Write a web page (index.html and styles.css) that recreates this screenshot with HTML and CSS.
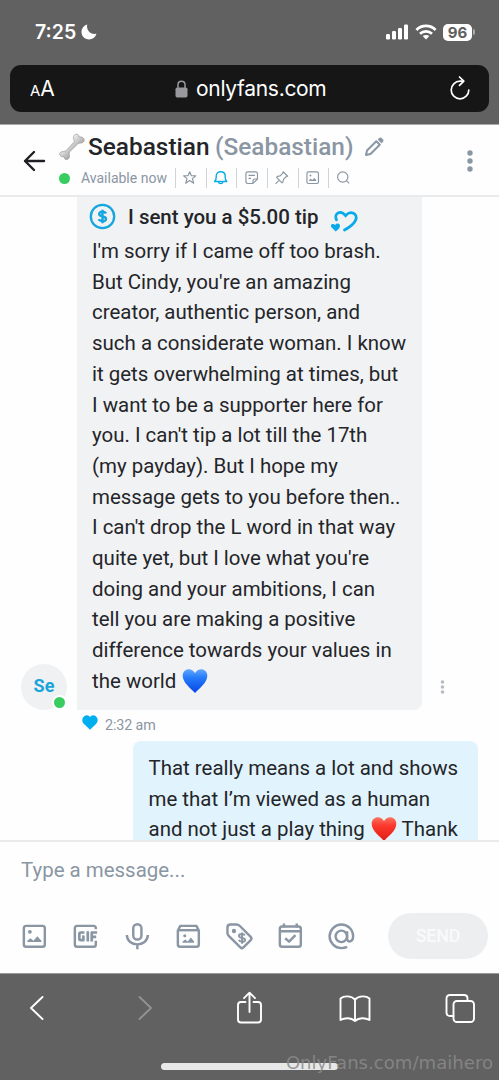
FILE: index.html
```html
<!DOCTYPE html>
<html lang="en">
<head>
<meta charset="utf-8">
<meta name="viewport" content="width=device-width">
<title>Messages</title>
<link rel="stylesheet" href="styles.css">
</head>
<body>
<div class="phone">
  <header class="browser-top">
    <div class="status">
      <span class="clock">7:25</span>
      <svg class="moon" width="16" height="16" viewBox="0 0 16 16"><path fill="#fff" d="M6.2.5C5.1 5.8 8.9 10.8 15.5 9.8C14.3 13.4 11.500 15.500 8 15.500C3.800 15.500.5 12.200.5 8.100C.5 4.600 2.800 1.500 6.200.5Z"/></svg>
      <div class="signals">
        <svg width="23" height="16" viewBox="0 0 23 16" fill="#fff"><rect x="0" y="10" width="4" height="5.500" rx="1.200"/><rect x="6" y="7" width="4" height="8.500" rx="1.200"/><rect x="12" y="4" width="4" height="11.500" rx="1.200"/><rect x="18" y=".5" width="4" height="15" rx="1.200"/></svg>
        <svg class="wifi" width="22" height="16" viewBox="0 0 22 16" fill="none" stroke="#fff" stroke-width="2.700"><path d="M1.400 6C6.700.6 15.300.6 20.600 6"/><path d="M5 9.700C8.300 6.500 13.700 6.500 17 9.700"/><path fill="#fff" stroke="none" d="M7.700 12.100C9.500 10.500 12.500 10.500 14.300 12.100L11 15.600Z"/></svg>
        <span class="battery">96</span><i class="nub"></i>
      </div>
    </div>
    <div class="address">
      <span class="text-size"><small>A</small>A</span>
      <div class="site">
        <svg width="13" height="18" viewBox="0 0 13 18"><rect x=".5" y="7.500" width="12" height="10" rx="1.700" fill="#98989d"/><path d="M3 8V4.800C3 .2 10 .2 10 4.800V8" fill="none" stroke="#98989d" stroke-width="1.500"/></svg>
        <span>onlyfans.com</span>
      </div>
      <svg class="reload" width="22" height="25" viewBox="0 0 22 25" fill="none" stroke="#fff" stroke-width="1.700" stroke-linecap="round" stroke-linejoin="round"><path d="M14 5.200H11A8.800 8.800 0 1 0 19.800 14"/><path d="M10.500 1L14.800 5.200L10.500 9.400"/></svg>
    </div>
  </header>

  <section class="chat-head">
    <svg class="back" width="24" height="24" viewBox="0 0 24 24" fill="none" stroke="#1f2023" stroke-width="2.400" stroke-linecap="round" stroke-linejoin="round"><path d="M21 12H2M11 3L2 12L11 21"/></svg>
    <div class="who">
      <div class="name-row">
        <svg class="bone" width="28" height="30" viewBox="0 0 28 30"><defs><linearGradient id="bone" x1="0" y1="0" x2="1" y2="1"><stop offset=".3" stop-color="#f2f2f2"/><stop offset=".65" stop-color="#aaa"/></linearGradient></defs><path d="M16 8C14.500 5 16 2 19 2.200C20.300 2.300 20.700 3.500 21 5C25.500 4 28 8.500 24.800 10.500C23 11.500 21.200 10.700 20 11.600L11.500 20C10.500 21.500 12 23 11.200 25.500C10 28.800 5.600 28 6.300 24.700C2.500 25.500 0 22 2.700 20.200C4.500 18.900 6.500 20 8 18.700L15.700 10.500C16.300 9.800 16.500 9 16 8Z" fill="url(#bone)" stroke="#999" stroke-width=".7"/></svg>
        <span class="name">Seabastian</span>
        <span class="alias">(Seabastian)</span>
        <svg class="pencil" width="20" height="20" viewBox="0 0 20 20" fill="none" stroke="#8a96a3" stroke-width="2" stroke-linejoin="round"><path d="M2 18L3 13.500L12.300 4.200L15.800 7.700L6.500 17Z"/><path fill="#8a96a3" stroke-width="1" d="M14.100 2.500L15.300 1.400C17.400.2 19.900 2.700 18.600 4.800L17.500 5.900Z"/></svg>
      </div>
      <div class="tools">
        <i class="online"></i><span class="available">Available now</span>
        <span class="tool"><svg viewBox="0 0 24 24"><path d="M12 2.800L14.700 9H21.500L16.200 13.500L18.200 20.500L12 16.500L5.800 20.500L7.800 13.500L2.500 9H9.300Z"/></svg></span>
        <span class="tool bell"><svg viewBox="0 0 24 24"><path d="M2.500 18H21.500C19.400 16.500 19 14 19 11V9.500C19 .5 5 .5 5 9.500V11C5 14 4.600 16.500 2.500 18ZM8.500 18.500C9.200 22.200 14.800 22.200 15.500 18.500"/></svg></span>
        <span class="tool"><svg viewBox="0 0 24 24"><path d="M14 21H6Q3 21 3 18V6Q3 3 6 3H18Q21 3 21 6V14L14 21V17Q14 14 17 14H21M7 8.500H17M7 13H11"/></svg></span>
        <span class="tool"><svg viewBox="0 0 24 24"><path d="M14.300 2.700L21.300 9.700L18.800 10.500L14.800 14.500L14 18.500L12.500 20L4 11.500L5.500 10L9.500 9.200L13.500 5.200ZM8.200 15.800L2.500 21.500"/></svg></span>
        <span class="tool"><svg viewBox="0 0 24 24"><rect x="3" y="3" width="18" height="18" rx="2.500"/><circle class="solid" cx="8.500" cy="8.500" r="1.500"/><path class="solid" d="M6.500 17V15.500L9 13.500L11.300 15.500L14.500 12.500L17.500 15.500V17Z"/></svg></span>
        <span class="tool"><svg viewBox="0 0 24 24"><circle cx="10.500" cy="11" r="8"/><path d="M16.200 16.700L20.500 21"/></svg></span>
      </div>
    </div>
    <svg class="more" width="6" height="22" viewBox="0 0 6 22" fill="#8a96a3"><circle cx="3" cy="3" r="2.700"/><circle cx="3" cy="11" r="2.700"/><circle cx="3" cy="19" r="2.700"/></svg>
  </section>

  <main class="thread">
    <div class="incoming">
      <div class="avatar">Se<i class="presence"></i></div>
      <article class="bubble theirs">
        <div class="tip">
          <svg class="coin" width="27" height="27" viewBox="0 0 27 27"><circle cx="13.500" cy="13.500" r="11.700" fill="none" stroke="#15a5df" stroke-width="2.300"/><path d="M17 10.600C15.900 8.200 10.200 7.800 10.200 10.900C10.200 14.200 17 12.300 17 16C17 19.100 10.900 18.700 9.800 16.100M13.500 6.800V20.200" fill="none" stroke="#15a5df" stroke-width="2.400"/></svg>
          <strong>I sent you a $5.00 tip</strong>
          <svg class="love" width="28" height="23" viewBox="0 0 28 23"><path d="M6.500 9.800C3.500 3.500 10.500-.7 15.600 5.600C20.500-.3 28 3.700 25.800 9.700C24.200 13.800 19 17.500 14.500 20" fill="none" stroke="#08abe9" stroke-width="2.800" stroke-linecap="round"/><path fill="#08abe9" d="M5.700 21.500L1.700 17.600C-.5 15.200 2.300 12.400 5.200 15C7.300 12 11 14 9.800 17C9 19 7.300 20.300 5.700 21.500Z"/></svg>
        </div>
        <p>I'm sorry if I came off too brash.<br>But Cindy, you're an amazing<br>creator, authentic person, and<br>such a considerate woman. I know<br>it gets overwhelming at times, but<br>I want to be a supporter here for<br>you. I can't tip a lot till the 17th<br>(my payday). But I hope my<br>message gets to you before then..<br>I can't drop the L word in that way<br>quite yet, but I love what you're<br>doing and your ambitions, I can<br>tell you are making a positive<br>difference towards your values in<br>the world <svg class="heart" width="26" height="26" viewBox="0 0 26 26"><defs><linearGradient id="blue" x2="0" y2="1"><stop stop-color="#63a7ff"/><stop offset=".35" stop-color="#267cfa"/><stop offset="1" stop-color="#0646e5"/></linearGradient></defs><path fill="url(#blue)" d="M13 25C9 20.500.7 15 .7 7.800C.7.300 10-.9 13 5.300C16-.9 25.300.300 25.300 7.800C25.300 15 17 20.500 13 25Z"/></svg></p>
      </article>
      <svg class="msg-more" width="5" height="14" viewBox="0 0 5 14" fill="#b4bbc3"><circle cx="2.500" cy="2" r="1.800"/><circle cx="2.500" cy="7" r="1.800"/><circle cx="2.500" cy="12" r="1.800"/></svg>
    </div>
    <div class="meta"><svg width="16" height="15" viewBox="0 0 16 15"><path fill="#00aff0" d="M8 14.700L2 9C-2 4.800 1.800 0 5 .2Q7 .3 8 2Q9 .3 11 .2C14.200 0 18 4.800 14 9Z"/></svg><time>2:32 am</time></div>
    <article class="bubble mine"><p>That really means a lot and shows<br>me that I’m viewed as a human<br>and not just a play thing <svg class="heart" width="26" height="26" viewBox="0 0 26 26"><defs><linearGradient id="red" x2="0" y2="1"><stop stop-color="#ff7463"/><stop offset=".35" stop-color="#fb392c"/><stop offset="1" stop-color="#e31c14"/></linearGradient></defs><path fill="url(#red)" d="M13 25C9 20.500.7 15 .7 7.800C.7.300 10-.9 13 5.300C16-.9 25.300.300 25.300 7.800C25.300 15 17 20.500 13 25Z"/></svg> Thank</p></article>
  </main>

  <section class="composer">
    <div class="placeholder">Type a message...</div>
    <div class="actions">
      <span class="action"><svg viewBox="0 0 24 24"><rect x="3.800" y="3.800" width="16.400" height="16.400" rx="1.800"/><circle class="solid" cx="8.500" cy="8.500" r="1.500"/><path class="solid" d="M6.500 16.500V15.500L9 13.500L11.300 15.500L14.300 12L17.500 15.500V16.500Z"/></svg></span>
      <span class="action"><svg viewBox="0 0 24 24"><path d="M20.200 6.500V5.600Q20.200 3.800 18.400 3.800H5.600Q3.800 3.800 3.800 5.600V18.400Q3.800 20.200 5.600 20.200H18.400Q20.200 20.200 20.200 18.400V15.500"/><path class="gif" d="M11.300 9H8.400Q7.300 9 7.300 10.100V13.900Q7.300 15 8.400 15H10.500V12.200H9.500M13.900 8V16M17 16V9H21.200M17 12.400H20.500"/></svg></span>
      <span class="action"><svg viewBox="0 0 24 24"><rect x="8.800" y="2.500" width="6.400" height="12" rx="3.200"/><path d="M3.800 11C3.800 20.700 20.200 20.700 20.200 11M12 18V22"/></svg></span>
      <span class="action"><svg viewBox="0 0 24 24"><path d="M3.800 7.500L5.700 3.800H18.300L20.200 7.500V18.400Q20.200 20.200 18.400 20.200H5.600Q3.800 20.200 3.800 18.400Z"/><path d="M3.800 7.200H20.200"/><circle class="solid" cx="9.200" cy="11.500" r="1.200"/><path class="solid" d="M7.500 17V16L9.500 14.500L11.500 16L14 13L16.500 16V17Z"/></svg></span>
      <span class="action"><svg viewBox="0 0 24 24"><path d="M2.700 5V9.300Q2.700 10.600 3.700 11.600L12.800 20.600Q14 21.800 15.200 20.600L20.900 14.900Q22.100 13.700 20.900 12.500L12.200 3.700Q11.200 2.700 9.800 2.700H5Q2.700 2.700 2.700 5Z"/><circle class="solid" cx="7.800" cy="7.800" r="1.700"/><path class="fine" d="M16.300 11.300C15.300 9.500 11.500 10 11.700 11.900C11.900 13.800 16.500 12.700 16.500 14.800C16.500 16.800 12.400 16.600 11.600 14.700M14.100 8.900V17.700"/></svg></span>
      <span class="action"><svg viewBox="0 0 24 24"><rect x="3.800" y="4.300" width="16.400" height="15.900" rx="1.800"/><path d="M3.800 8H20.200M7 2V5M17 2V5M8 13.500L11 16.200L16 11"/></svg></span>
      <span class="action"><svg viewBox="0 0 24 24"><circle cx="12" cy="12" r="4.500"/><path d="M16.500 8V13.500C16.500 17.500 21.200 16.500 21.200 12C21.200 6.500 17 2.800 12 2.800C7 2.800 2.800 7 2.800 12C2.800 17 7 21.200 12 21.200Q14.500 21.200 16.500 20.200"/></svg></span>
      <span class="send">SEND</span>
    </div>
  </section>

  <footer class="browser-bottom">
    <nav>
      <svg width="54" height="36" viewBox="0 0 54 36"><path d="M33.500 7L22 18L33.500 29"/></svg>
      <svg class="forward" width="54" height="36" viewBox="0 0 54 36"><path d="M24.500 7L36 18L24.500 29"/></svg>
      <svg width="54" height="36" viewBox="0 0 54 36"><path d="M23.500 12H19Q16 12 16 15V29.500Q16 32.500 19 32.500H36Q39 32.500 39 29.500V15Q39 12 36 12H31.500M27.500 22V3M22 8.200L27.500 2.700L33 8.200"/></svg>
      <svg width="54" height="36" viewBox="0 0 54 36"><path d="M27 9.500C23 5.500 16 5.500 12.500 8.500V30C17 27.500 23 27.500 27 31C31 27.500 37 27.500 41.500 30V8.500C38 5.500 31 5.500 27 9.500V31"/></svg>
      <svg width="54" height="36" viewBox="0 0 54 36"><rect x="19.500" y="11" width="20.500" height="21" rx="3.500"/><path d="M19.500 26H16Q12.500 26 12.500 22.500V8.500Q12.500 5 16 5H30Q33.500 5 33.500 8.500V11"/></svg>
    </nav>
    <div class="home-bar"></div>
    <span class="watermark">OnlyFans.com/maihero</span>
  </footer>
</div>
</body>
</html>
```
FILE: styles.css
```css
* { box-sizing: border-box; }
body { margin: 0; background: #fff; font-family: Roboto, sans-serif; color: #242529; }
svg { display: block; flex: none; overflow: visible; }
.phone { width: 499px; height: 1080px; display: flex; flex-direction: column; overflow: hidden; background: #fefefe; }

.browser-top { height: 125px; flex: none; background: #616161; padding: 18px 10px 0; font-family: Inter, sans-serif; color: #fff; border-bottom: 1px solid #aaa; }
.status { height: 28px; display: flex; align-items: center; padding: 0 14px 0 25px; }
.clock { font-size: 19.500px; font-weight: 600; letter-spacing: 0; width: 43px; }
.moon { margin-left: 3px; }
.signals { margin-left: auto; display: flex; align-items: center; }
.wifi { margin-left: 6px; }
.battery { margin-left: 6px; width: 29px; height: 17px; border-radius: 5px; background: #fff; color: #606060; font-size: 15px; line-height: 17px; font-weight: 700; text-align: center; }
.nub { width: 2px; height: 6px; margin-left: 1px; background: #aaa; border-radius: 0 2px 2px 0; }
.address { height: 47px; margin-top: 19px; border-radius: 11px; background: #161616; display: flex; align-items: center; padding: 0 18px 0 20px; }
.text-size { width: 145px; font-size: 21px; letter-spacing: 0; }
.text-size small { font-size: 15px; }
.site { display: flex; align-items: center; gap: 8px; font-size: 21px; letter-spacing: -.3px; }
.reload { margin-left: auto; }

.chat-head { height: 72px; flex: none; display: flex; border-bottom: 2px solid #e9eaeb; padding-left: 23px; }
.back { margin-top: 24px; }
.who { margin-left: 11px; flex: 1; }
.name-row { height: 41px; display: flex; align-items: center; white-space: nowrap; font-size: 24.400px; font-weight: 500; padding-top: 2px; }
.bone { margin-right: 2px; }
.name { width: 127px; }
.alias { width: 149px; color: #8a96a3; }
.pencil { margin-top: 1px; }
.tools { height: 24px; display: flex; align-items: center; color: #8a96a3; }
.online { width: 11px; height: 11px; margin-left: 1px; border-radius: 50%; background: #38cc61; }
.available { width: 105px; padding-left: 11px; font-size: 14px; letter-spacing: 0; white-space: nowrap; }
.tool { width: 30.700px; height: 20px; border-left: 1px solid #cfd3d8; display: grid; place-items: center; }
.tool svg { width: 15.400px; height: 15.400px; margin-left: -2px; fill: none; stroke: #8a96a3; stroke-width: 1.800; stroke-linejoin: round; }
.tool.bell svg { stroke: #08abe9; stroke-width: 2.200; }
.tool .solid, .action .solid { fill: #8a96a3; stroke: none; }
.more { margin: 25px 26px 0 0; }

.thread { height: 643px; flex: none; overflow: hidden; padding: 0 21px; }
.incoming { display: flex; height: 513px; align-items: flex-end; }
.avatar { position: relative; width: 46px; height: 46px; border-radius: 50%; background: #f0f1f3; color: #1aa4dc; font-size: 18px; font-weight: 700; line-height: 44px; text-align: center; }
.presence { position: absolute; right: 2px; bottom: 2px; width: 11px; height: 11px; border-radius: 50%; background: #38cc61; box-shadow: 0 0 0 2px #fff; }
.bubble p { margin: 0; font-size: 20.470px; line-height: 30.710px; white-space: nowrap; }
.theirs { width: 345px; height: 513px; margin-left: 10px; padding: 0 15px; border-radius: 0 0 8px 0; background: #f1f2f4; }
.tip { height: 39px; display: flex; align-items: center; }
.tip strong { font-size: 20.470px; font-weight: 500; width: 202px; margin-left: 12px; white-space: nowrap; }
.coin { margin-left: -3px; }
.love { margin-top: 10px; }
.heart { display: inline-block; margin-left: 1px; vertical-align: -6px; }
.msg-more { margin: 0 0 16px 18px; }
.meta { height: 31px; display: flex; align-items: center; padding-left: 61px; color: #8a96a3; font-size: 14.300px; }
.meta svg { margin-top: -6px; }
.meta time { margin-left: 7px; margin-top: -1px; letter-spacing: -.1px; }
.mine { width: 345px; height: 140px; margin-left: 112px; padding: 12px 15px 12px 15.500px; border-radius: 8px; background: #e1f3fc; }

.composer { height: 133px; flex: none; border-top: 2px solid #e9eaeb; background: #fefefe; }
.placeholder { height: 59px; padding-left: 21px; font-size: 20.470px; line-height: 57px; color: #8a96a3; letter-spacing: 0; }
.actions { height: 70px; display: flex; align-items: center; padding: 0 11px 0 9px; }
.action { width: 51.200px; display: grid; place-items: center; flex: none; }
.action svg { width: 30.700px; height: 30.700px; fill: none; stroke: #8a96a3; stroke-width: 1.900; stroke-linejoin: round; }
.action .gif { stroke-width: 2.100; }
.action .fine { stroke-width: 1.500; }
.send { margin-left: auto; width: 100px; height: 46px; border-radius: 23px; background: #edeef0; color: #f9fafb; text-align: center; line-height: 45px; font-size: 17.900px; font-weight: 500; letter-spacing: -.2px; }

.browser-bottom { height: 107px; flex: none; position: relative; background: #616161; border-top: 1px solid #999; }
.browser-bottom nav { display: flex; justify-content: space-between; padding: 16px 11px 0 9px; }
nav svg { fill: none; stroke: #fff; stroke-width: 1.900; stroke-linecap: round; stroke-linejoin: round; }
nav .forward { stroke: #929292; }
.home-bar { width: 177px; height: 7px; margin: 37px auto 0; border-radius: 4px; background: #e8e8e8; }
.watermark { position: absolute; right: 6px; bottom: 5px; font: 18.100px/24px "DejaVu Sans", sans-serif; color: rgba(139,139,139,.85); white-space: nowrap; }
```
